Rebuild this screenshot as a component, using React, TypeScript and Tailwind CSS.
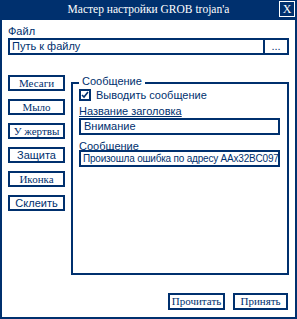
const navy = "border-[#00306e]";

const SideButton = ({ label, serif }: { label: string; serif?: boolean }) => (
    <button
        className={`w-[57px] h-[16px] border-2 ${navy} bg-white text-[11px] leading-none text-[#00306e] flex items-center justify-center ${serif ? "font-['Liberation_Serif',serif]" : ""}`}
    >
        {label}
    </button>
);

const App = () => {
    return (
        <div className="w-[297px] h-[319px] bg-white flex flex-col font-['Liberation_Sans',sans-serif] text-[#00306e] text-[11px]">
            {/* Title bar */}
            <div className="relative h-[20px] bg-[#00306e] flex items-center justify-center text-white text-[11.5px]">
                <span className="font-['Liberation_Serif',serif]">Мастер настройки GROB trojan'a</span>
                <div className="absolute right-[2px] top-[1px] w-[16px] h-[16px] border border-white flex items-center justify-center text-[12px] font-['Liberation_Serif',serif]">
                    X
                </div>
            </div>

            <div className={`flex-1 border-x-2 border-b-2 ${navy} pl-[6px] pr-[6px] flex flex-col`}>
                <div className="pt-[6px] h-[18px] leading-none">Файл</div>
                <div className={`h-[17px] w-[281px] border-2 ${navy} flex`}>
                    <div className="flex-1 px-[2px] flex items-center leading-none">Путь к файлу</div>
                    <div className={`w-[24px] border-l-2 ${navy} flex items-center justify-center leading-none`}>...</div>
                </div>

                <div className="flex mt-[20px]">
                    <div className="flex flex-col gap-[8px] w-[57px]">
                        <SideButton label="Месаги" serif />
                        <SideButton label="Мыло" serif />
                        <SideButton label="У жертвы" serif />
                        <SideButton label="Защита" />
                        <SideButton label="Иконка" serif />
                        <SideButton label="Склеить" />
                    </div>

                    {/* Group box */}
                    <div className={`relative ml-[6px] mt-[7px] w-[218px] h-[193px] border-2 ${navy} pl-[6px]`}>
                        <span className="absolute left-[6px] -top-[8px] bg-white px-[3px] leading-none text-[11px]">Сообщение</span>
                        <div className="mt-[5px] flex items-center gap-[5px]">
                            <div className={`w-[12px] h-[12px] border-2 ${navy} flex items-center justify-center`}>
                                <svg width="8" height="8" viewBox="0 0 8 8">
                                    <path d="M1 4 L3 6 L7 1" stroke="#00306e" strokeWidth="1.6" fill="none" />
                                </svg>
                            </div>
                            <span className="leading-none">Выводить сообщение</span>
                        </div>
                        <div className="mt-[5px] underline leading-none h-[12px]">Название заголовка</div>
                        <div className={`h-[17px] w-[201px] border-2 ${navy} px-[3px] flex items-center leading-none`}>Внимание</div>
                        <div className="mt-[6px] underline leading-none h-[9px]">Сообщение</div>
                        <div className={`h-[17px] w-[201px] border-2 ${navy} px-[2px] flex items-center leading-none whitespace-nowrap text-[10px] tracking-[-0.2px]`}>
                            Произошла ошибка по адресу AAx32BC097
                        </div>
                    </div>
                </div>

                <div className="mt-auto mb-[7px] flex justify-end gap-[8px] pr-[1px]">
                    <button className={`w-[57px] h-[17px] border-2 ${navy} flex items-center justify-center text-[11px] leading-none font-['Liberation_Serif',serif]`}>
                        Прочитать
                    </button>
                    <button className={`w-[55px] h-[17px] border-2 ${navy} flex items-center justify-center text-[11px] leading-none font-['Liberation_Serif',serif]`}>
                        Принять
                    </button>
                </div>
            </div>
        </div>
    );
};

export default App;
